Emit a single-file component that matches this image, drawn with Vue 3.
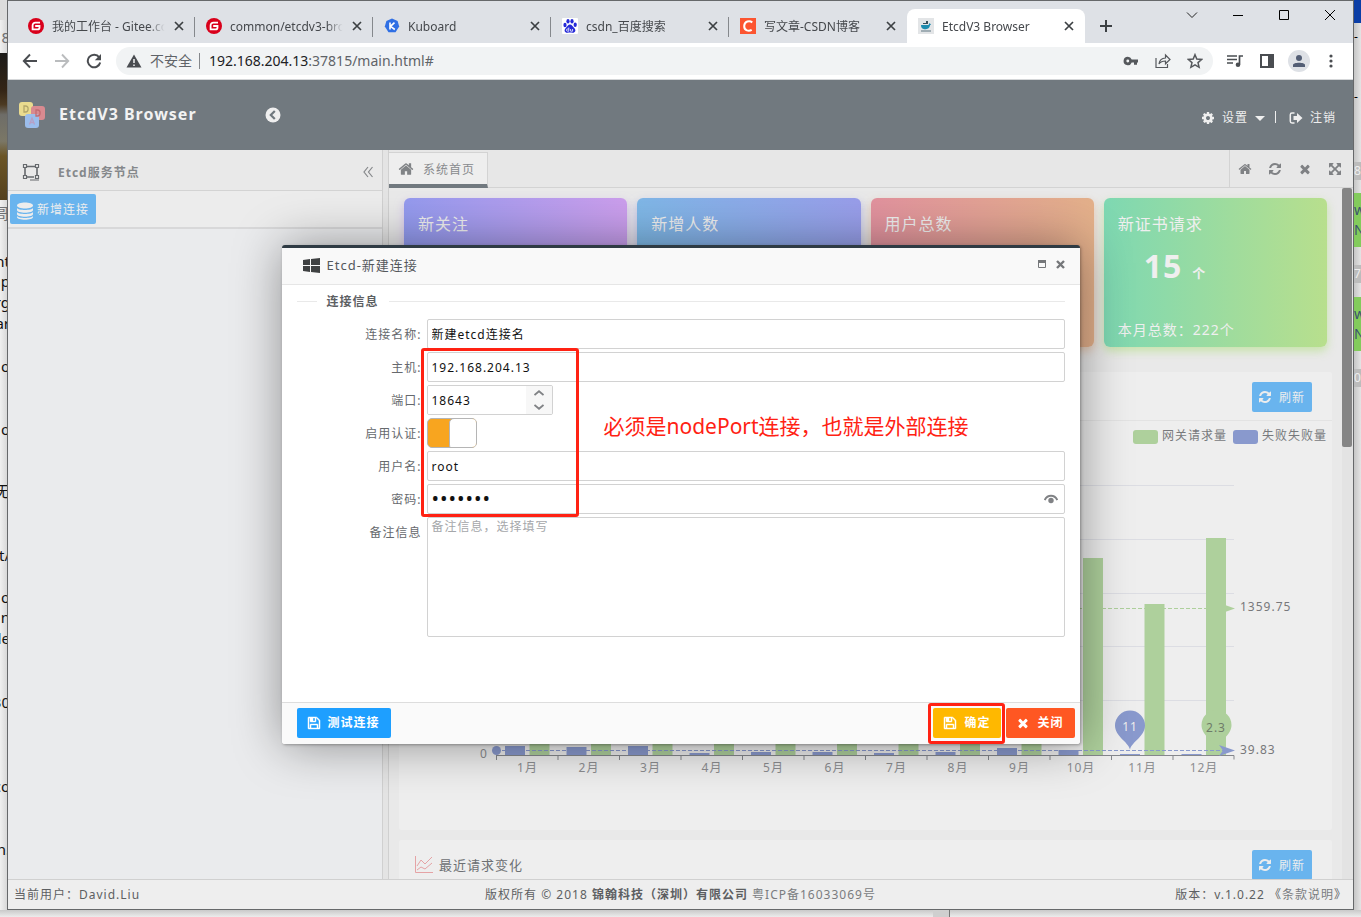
<script setup>
import { ref } from 'vue'

const fa = {
  home: 'M1472 992v480q0 26-19 45t-45 19h-384v-384h-256v384h-384q-26 0-45-19t-19-45v-480q0-1 .5-3t.5-3l575-474 575 474q1 2 1 6zm223-69l-62 74q-8 9-21 11h-3q-13 0-21-7l-692-577-692 577q-12 8-24 7-13-2-21-11l-62-74q-8-10-7-23.5t11-21.5l719-599q32-26 76-26t76 26l244 204v-195q0-14 9-23t23-9h192q14 0 23 9t9 23v408l219 182q10 8 11 21.5t-7 23.5z',
  refresh: 'M1639 1056q0 5-1 7-64 268-268 434.5t-478 166.5q-146 0-282.5-55t-243.5-157l-129 129q-19 19-45 19t-45-19-19-45v-448q0-26 19-45t45-19h448q26 0 45 19t19 45-19 45l-137 137q71 66 161 102t187 36q134 0 250-65t186-179q11-17 53-117 8-23 30-23h192q13 0 22.5 9.5t9.5 22.5zm25-800v448q0 26-19 45t-45 19h-448q-26 0-45-19t-19-45 19-45l138-138q-148-137-349-137-134 0-250 65t-186 179q-11 17-53 117-8 23-30 23h-199q-13 0-22.5-9.5t-9.5-22.5v-7q65-268 270-434.5t480-166.5q146 0 284 55.5t245 156.5l130-129q19-19 45-19t45 19 19 45z',
  times: 'M1490 1322q0 40-28 68l-136 136q-28 28-68 28t-68-28l-294-294-294 294q-28 28-68 28t-68-28l-136-136q-28-28-28-68t28-68l294-294-294-294q-28-28-28-68t28-68l136-136q28-28 68-28t68 28l294 294 294-294q28-28 68-28t68 28l136 136q28 28 28 68t-28 68l-294 294 294 294q28 28 28 68z',
  expand: 'M1411 541l-355 355 355 355 144-144q29-31 70-14 39 17 39 59v448q0 26-19 45t-45 19h-448q-42 0-59-40-17-39 14-69l144-144-355-355-355 355 144 144q31 30 14 69-17 40-59 40h-448q-26 0-45-19t-19-45v-448q0-42 40-59 39-17 69 14l144 144 355-355-355-355-144 144q-19 19-45 19-12 0-24-5-40-17-40-59v-448q0-26 19-45t45-19h448q42 0 59 40 17 39-14 69l-144 144 355 355 355-355-144-144q-31-30-14-69 17-40 59-40h448q26 0 45 19t19 45v448q0 42-39 59-13 5-25 5-26 0-45-19z',
  cog: 'M1152 896q0-106-75-181t-181-75-181 75-75 181 75 181 181 75 181-75 75-181zm512-109v222q0 12-8 23t-20 13l-185 28q-19 54-39 91 35 50 107 138 10 12 10 25t-9 23q-27 37-99 108t-94 71q-12 0-26-9l-138-108q-44 23-91 38-16 136-29 186-7 28-36 28h-222q-14 0-24.5-8.5t-11.5-21.5l-28-184q-49-16-90-37l-141 107q-10 9-25 9-14 0-25-11-126-114-165-168-7-10-7-23 0-12 8-23 15-21 51-66.5t54-70.5q-27-50-41-99l-183-27q-13-2-21-12.5t-8-23.5v-222q0-12 8-23t19-13l186-28q14-46 39-92-40-57-107-138-10-12-10-24 0-10 9-23 26-36 98.5-107.5t94.5-71.5q13 0 26 10l138 107q44-23 91-38 16-136 29-186 7-28 36-28h222q14 0 24.5 8.5t11.5 21.5l28 184q49 16 90 37l142-107q9-9 24-9 13 0 25 10 129 119 165 170 7 8 7 22 0 12-8 23-15 21-51 66.5t-54 70.5q26 50 41 98l183 28q13 2 21 12.5t8 23.5z',
  save: 'M512 1536h768v-384h-768v384zm896 0h128v-896q0-14-10-38.5t-20-34.5l-281-281q-10-10-34-20t-39-10v416q0 40-28 68t-68 28h-576q-40 0-68-28t-28-68v-416h-128v1280h128v-416q0-40 28-68t68-28h832q40 0 68 28t28 68v416zm-384-928v-320q0-13-9.5-22.5t-22.5-9.5h-192q-13 0-22.5 9.5t-9.5 22.5v320q0 13 9.5 22.5t22.5 9.5h192q13 0 22.5-9.5t9.5-22.5zm640 32v928q0 40-28 68t-68 28h-1344q-40 0-68-28t-28-68v-1344q0-40 28-68t68-28h928q40 0 88 20t76 48l280 280q28 28 48 76t20 88z'
}

const tabs = [
  { icon: 'gitee', title: '我的工作台 - Gitee.com' },
  { icon: 'gitee', title: 'common/etcdv3-browser' },
  { icon: 'kuboard', title: 'Kuboard' },
  { icon: 'baidu', title: 'csdn_百度搜索' },
  { icon: 'csdn', title: '写文章-CSDN博客' },
  { icon: 'docker', title: 'EtcdV3 Browser', active: true }
]

const leftLines = [
  { top: 28, text: '8', tone: 'dim' }, { top: 204, text: '哥', tone: 'dim' },
  { top: 252, text: 'nt' }, { top: 272, text: 'mp' }, { top: 293, text: 'rg' }, { top: 314, text: 'ar' },
  { top: 357, text: 'o' }, { top: 420, text: 'o' }, { top: 482, text: '无' }, { top: 546, text: 't/' },
  { top: 588, text: 'o' }, { top: 608, text: 'in' }, { top: 629, text: 'de' }, { top: 693, text: '30' },
  { top: 777, text: 'co' }, { top: 840, text: 'n.' }
]

const cards = [
  { title: '新关注', count: '12', unit: '个', total: '本月总数：180个', tone: 'violet' },
  { title: '新增人数', count: '18', unit: '个', total: '本月总数：246个', tone: 'sky' },
  { title: '用户总数', count: '96', unit: '个', total: '本月总数：960个', tone: 'coral' },
  { title: '新证书请求', count: '15', unit: '个', total: '本月总数：222个', tone: 'mint' }
]

const axisY = 334
const step = 61.5
const months = [
  { ok: 120, fail: 9 }, { ok: 140, fail: 8 }, { ok: 110, fail: 9 }, { ok: 150, fail: 2 },
  { ok: 130, fail: 3 }, { ok: 160, fail: 3 }, { ok: 120, fail: 2 }, { ok: 145, fail: 3 },
  { ok: 170, fail: 7 }, { ok: 197, fail: 5 }, { ok: 151, fail: 1 }, { ok: 217, fail: 1 }
].map((m, i) => ({ ...m, x: 97.5 + i * step, label: `${i + 1}月` }))
const grid = [65, 119, 173, 226, 280]

const form = ref({
  name: '新建etcd连接名', host: '192.168.204.13', port: '18643', auth: true, user: 'root', password: 'etcd123', note: ''
})
const bump = (n) => { form.value.port = String(Number(form.value.port) + n) }
</script>

<template>
  <div class="desktop">
    <div class="behind-left" aria-hidden="true">
      <div class="photo"></div>
      <span v-for="l in leftLines" :key="l.top" class="frag" :class="l.tone" :style="{ top: l.top + 'px' }">{{ l.text }}</span>
    </div>

    <div class="window">
      <header class="tabstrip">
        <div v-for="(t, i) in tabs" :key="i" class="tab" :class="{ active: t.active, last: i === 4 }">
          <svg v-if="t.icon === 'gitee'" class="fav" viewBox="0 0 16 16"><circle cx="8" cy="8" r="8" fill="#d9001b" /><path d="M12 4.6H7.4a2.8 2.8 0 0 0-2.8 2.8v4h4.900a2 2 0 0 0 2-2V8H7.200" fill="none" stroke="#fff" stroke-width="1.800" /></svg>
          <svg v-else-if="t.icon === 'kuboard'" class="fav" viewBox="0 0 16 16"><path d="M8 .6l5.600 2.400 1.600 5.600-3.700 5.700H4.500L.8 8.600 2.400 3z" fill="#2f6fe4" /><path d="M6 4.500v7M10.500 4.700L6.500 8.300l4.300 3.200" fill="none" stroke="#fff" stroke-width="1.600" /></svg>
          <svg v-else-if="t.icon === 'baidu'" class="fav" viewBox="0 0 16 16"><rect width="16" height="16" rx="1" fill="#fff" /><g fill="#2529d8"><ellipse cx="3" cy="7" rx="1.600" ry="2.200" /><ellipse cx="6" cy="3.300" rx="1.600" ry="2.200" /><ellipse cx="10" cy="3.300" rx="1.600" ry="2.200" /><ellipse cx="13.200" cy="6.800" rx="1.600" ry="2.200" /><path d="M8 6.600c2 0 2.600 2 4.200 3.400 2.400 2.200.8 5.200-1.800 4.800-1.600-.3-3.200-.3-4.800 0C3 15.200 1.400 12.200 3.800 10 5.400 8.600 6 6.600 8 6.600z" /></g><path d="M6.800 9.500v3.700H5.600a1 1 0 0 1 0-2.200h1.200M8.600 11v2.200h2V11" fill="none" stroke="#fff" stroke-width=".8" /></svg>
          <svg v-else-if="t.icon === 'csdn'" class="fav" viewBox="0 0 16 16"><rect width="16" height="16" fill="#fc5531" /><path d="M12.300 4.300C9.500 2.400 4.500 3 4.200 8c-.1 4.900 4.700 5.500 7.500 3.800" fill="none" stroke="#fff" stroke-width="2" /></svg>
          <svg v-else class="fav" viewBox="0 0 16 16"><rect width="16" height="16" fill="#e3e5e7" /><path d="M3 7h7.500l1-2 1.500 1.500-1 .7C11.500 10.500 9 11.300 6.500 11.200 4 11 3 9.500 3 7z" fill="#1d8caf" /><path d="M5 5h3V3h2v3H5z" fill="#39505c" /><path d="M3 13h10" stroke="#8a9aa3" stroke-width="1.500" /></svg>
          <span class="tab-title">{{ t.title }}</span>
          <button class="tab-close" aria-label="关闭标签页"><svg width="10" height="10" viewBox="0 0 10 10"><path d="M1 1l8 8M9 1L1 9" stroke="#3c4043" stroke-width="1.700" /></svg></button>
        </div>
        <button class="new-tab" aria-label="新标签页"><svg width="12" height="12" viewBox="0 0 12 12"><path d="M6 0v12M0 6h12" stroke="#3c4043" stroke-width="2" /></svg></button>
        <div class="win-ctl">
          <button aria-label="搜索标签页"><svg width="12" height="12" viewBox="0 0 12 12"><path d="M1 3.500l5 5 5-5" fill="none" stroke="#222" /></svg></button>
          <button aria-label="最小化"><svg width="12" height="12" viewBox="0 0 12 12"><path d="M1 6.500h10" stroke="#000" /></svg></button>
          <button aria-label="最大化"><svg width="12" height="12" viewBox="0 0 12 12"><path d="M1.500 1.500h9v9h-9z" fill="none" stroke="#000" /></svg></button>
          <button aria-label="关闭"><svg width="12" height="12" viewBox="0 0 12 12"><path d="M1 1l10 10M11 1L1 11" stroke="#000" /></svg></button>
        </div>
      </header>

      <div class="toolbar">
        <button aria-label="后退"><svg width="16" height="16" viewBox="0 0 16 16"><path d="M15 8H2M8 1.500L1.800 8 8 14.500" fill="none" stroke="#4a4d51" stroke-width="1.900" /></svg></button>
        <button aria-label="前进"><svg width="16" height="16" viewBox="0 0 16 16"><path d="M1 8h13M8 1.500L14.200 8 8 14.500" fill="none" stroke="#babcbe" stroke-width="1.900" /></svg></button>
        <button aria-label="刷新"><svg width="16" height="16" viewBox="0 0 16 16"><path d="M13.200 4.300A6.300 6.300 0 1 0 14.200 9.500" fill="none" stroke="#4a4d51" stroke-width="2" /><path d="M15 1v6.200H8.800z" fill="#4a4d51" /></svg></button>
        <div class="omnibox">
          <svg width="16" height="14" viewBox="0 0 16 14"><path d="M8 .5L15.500 13.500H.5z" fill="#4a4d51" /><path d="M8 5v4M8 10.500v1.600" stroke="#fff" stroke-width="1.400" /></svg>
          <span class="insecure">不安全</span>
          <i class="omni-sep"></i>
          <span class="url"><b>192.168.204.13</b>:37815/main.html#</span>
          <div class="omni-icons">
            <svg width="16" height="16" viewBox="0 0 16 16"><path fill-rule="evenodd" d="M4.800 3.800a4.200 4.200 0 0 1 3.900 2.700H15v3h-1v2.200h-3V9.500H8.700A4.200 4.200 0 1 1 4.800 3.800zm0 2.800a1.400 1.400 0 1 0 0 2.900 1.400 1.400 0 0 0 0-2.900z" fill="#55585c" /></svg>
            <svg width="16" height="16" viewBox="0 0 16 16"><path d="M1 5v9.500h11.500V11M4 11c.5-4 3-5.800 6.500-6V2l4.500 4.500-4.500 4.300V8C7.500 8 5.500 8.800 4 11z" fill="none" stroke="#55585c" stroke-width="1.200" /></svg>
            <svg width="16" height="16" viewBox="0 0 16 16"><path d="M8 1.700l1.800 4.400 4.800.4L11 9.600l1.100 4.700L8 11.800l-4.100 2.500L5 9.600 1.400 6.500l4.800-.4z" fill="none" stroke="#55585c" stroke-width="1.500" /></svg>
          </div>
        </div>
        <div class="tools">
          <svg width="16" height="16" viewBox="0 0 16 16"><path d="M0 3h10M0 6.500h10M0 10h6M12.500 11.500V3H16" fill="none" stroke="#4a4d51" stroke-width="1.700" /><circle cx="11" cy="11.700" r="2.300" fill="#4a4d51" /></svg>
          <svg width="16" height="16" viewBox="0 0 16 16"><path d="M1 1h14v14H1z M3 3v10h6V3z" fill-rule="evenodd" fill="#4a4d51" /></svg>
          <span class="avatar"><svg width="14" height="14" viewBox="0 0 14 14"><circle cx="7" cy="4" r="3" fill="#535e75" /><path d="M1 13v-2c0-3 12-3 12 0v2z" fill="#535e75" /></svg></span>
          <svg width="16" height="16" viewBox="0 0 16 16"><g fill="#4a4d51"><circle cx="8" cy="3" r="1.600" /><circle cx="8" cy="8" r="1.600" /><circle cx="8" cy="13" r="1.600" /></g></svg>
        </div>
      </div>

      <div class="app">
        <header class="app-head">
          <svg class="logo" width="28" height="28" viewBox="0 0 28 28"><rect x="1" y="1" width="14" height="14" rx="3" fill="#eadb8f" /><rect x="13" y="5" width="14" height="14" rx="3" fill="#d98a90" /><rect x="7" y="13" width="14" height="14" rx="3" fill="#9bbdec" /><path d="M6 5v6h1.500c3.500 0 3.500-6 0-6z" fill="none" stroke="#b3a76b" stroke-width="1.300" /><path d="M18 9v6h1.500c3.500 0 3.500-6 0-6z" fill="none" stroke="#c26b72" stroke-width="1.300" /><path d="M11.500 23.500l2.500-6.500 2.500 6.500M12.500 21.500h3" fill="none" stroke="#b79fc4" stroke-width="1.300" /></svg>
          <h1>EtcdV3 Browser</h1>
          <button class="fold" aria-label="收起菜单"><svg width="16" height="16" viewBox="0 0 16 16"><circle cx="8" cy="8" r="7.500" fill="#efefef" /><path d="M9.800 4L5.800 8l4 4" fill="none" stroke="#71797f" stroke-width="2.200" /></svg></button>
          <nav>
            <a href="#"><svg width="14" height="14" viewBox="0 0 1792 1792"><path :d="fa.cog" fill="#efefef" /></svg>设置<i class="caret"></i></a>
            <i class="bar"></i>
            <a href="#"><svg width="14" height="14" viewBox="0 0 14 14"><path d="M5.500 2H3a1.700 1.700 0 0 0-1.700 1.700v6.600A1.700 1.700 0 0 0 3 12h2.500" fill="none" stroke="#efefef" stroke-width="1.500" /><path d="M4.500 5H8V2l5.500 5L8 12V9H4.500z" fill="#efefef" /></svg>注销</a>
          </nav>
        </header>

        <main>
          <aside>
            <div class="side-head">
              <svg width="18" height="18" viewBox="0 0 18 18"><path d="M3 3.500h12M3 14h9M3 3.500V14M15 3.500V14" fill="none" stroke="#66696d" stroke-width="1.600" /><g fill="#ececec" stroke="#66696d" stroke-width="1.200"><path d="M1.500 1.500h3v3h-3zM13.500 1.500h3v3h-3zM1.500 12.500h3v3h-3zM13.500 12.500h3v3h-3z" /></g><path d="M8 17h9" stroke="#66696d" /></svg>
              <strong>Etcd服务节点</strong>
              <button aria-label="收起"><svg width="10" height="12" viewBox="0 0 10 12"><path d="M5 1L1 6l4 5M9.500 1l-4 5 4 5" fill="none" stroke="#85878a" stroke-width="1.200" /></svg></button>
            </div>
            <div class="side-tools">
              <button class="btn soft add"><svg width="16" height="18" viewBox="0 0 16 18"><g fill="#ededed"><path d="M0 3.500C0-.5 16-.5 16 3.500S0 7.500 0 3.500z" /><path d="M0 6c1 2.600 15 2.600 16 0v2c0 3.600-16 3.600-16 0z" /><path d="M0 10c1 2.600 15 2.600 16 0v2c0 3.600-16 3.600-16 0z" /><path d="M0 14c1 2.600 15 2.600 16 0v1c0 3.600-16 3.600-16 0z" /></g></svg><span>新增连接</span></button>
            </div>
          </aside>

          <section class="content">
            <div class="page-tabs">
              <a href="#" class="page-tab"><svg width="16" height="16" viewBox="0 0 1792 1792"><path :d="fa.home" fill="#808386" /></svg><span>系统首页</span></a>
              <div class="page-tools">
                <button v-for="k in ['home', 'refresh', 'times', 'expand']" :key="k" :aria-label="k"><svg width="14" height="14" viewBox="0 0 1792 1792"><path :d="fa[k]" fill="#7f8184" /></svg></button>
              </div>
            </div>
            <div class="scroll">
              <div class="scroll-body">
                <div class="cards">
                  <article v-for="c in cards" :key="c.title" class="card" :class="c.tone">
                    <h2>{{ c.title }}</h2>
                    <p class="count"><b>{{ c.count }}</b><span>{{ c.unit }}</span></p>
                    <p class="total">{{ c.total }}</p>
                  </article>
                </div>

                <section class="panel">
                  <div class="panel-head">
                    <button class="btn soft"><svg width="14" height="14" viewBox="0 0 1792 1792"><path :d="fa.refresh" fill="#ededed" /></svg><span>刷新</span></button>
                  </div>
                  <div class="legend"><i class="ok"></i>网关请求量<i class="fail"></i>失败失败量</div>
                  <svg class="chart" viewBox="0 0 933 384">
                    <path v-for="y in grid" :key="y" :d="`M97 ${y - 0.5}h738`" stroke="#dcdde3" />
                    <g v-for="m in months" :key="m.label">
                      <rect :x="m.x + 8.500" :y="axisY - m.fail" width="20" :height="m.fail" fill="#8999cd" />
                      <rect :x="m.x + 33" :y="axisY - m.ok" width="20" :height="m.ok" fill="#aed09c" />
                      <path :d="`M${m.x} ${axisY}v5`" stroke="#85878c" />
                      <text :x="m.x + 31" y="351" text-anchor="middle" fill="#8c8d90">{{ m.label }}</text>
                    </g>
                    <path d="M97 334.500h738v4" fill="none" stroke="#85878c" />
                    <text x="81" y="337" fill="#8c8d90">0</text>
                    <path d="M97 187.500h730" stroke="#aed09c" stroke-dasharray="4 2" />
                    <path d="M826 184l10 3.500-10 3.500z" fill="#aed09c" />
                    <path d="M97 329.500h730" stroke="#8999cd" stroke-dasharray="4 2" />
                    <circle cx="97.500" cy="329.500" r="4.500" fill="#8999cd" />
                    <path d="M820 324l16 5.500-16 5.500 4-5.500z" fill="#8999cd" />
                    <path d="M731 328.500c-2-8-15-13-15-24a15 15 0 0 1 30 0c0 11-13 16-15 24z" fill="#8999cd" />
                    <path d="M817.500 328c-2-8-15-13-15-24a15 15 0 0 1 30 0c0 11-13 16-15 24z" fill="#aed09c" />
                    <text x="731" y="310" text-anchor="middle" fill="#eee">11</text>
                    <text x="817" y="311" text-anchor="middle" fill="#6e7b69">2.3</text>
                    <text x="841" y="190" fill="#77787b">1359.75</text>
                    <text x="841" y="333" fill="#77787b">39.83</text>
                  </svg>
                </section>

                <section class="panel">
                  <div class="panel-head">
                    <h3><svg width="18" height="18" viewBox="0 0 18 18"><path d="M.5 0v16.500H18M2 10l4-6 4 4 7-7M2 14l4-3 4 2 7-6" fill="none" stroke="#e5a3a5" /></svg>最近请求变化</h3>
                    <button class="btn soft"><svg width="14" height="14" viewBox="0 0 1792 1792"><path :d="fa.refresh" fill="#ededed" /></svg><span>刷新</span></button>
                  </div>
                </section>
              </div>
              <div class="track"><div class="thumb"></div></div>
            </div>
          </section>
        </main>

        <footer class="app-foot">
          <span>当前用户：David.Liu</span>
          <span>版权所有 © 2018 <b>锦翰科技（深圳）有限公司</b> <em>粤ICP备16033069号</em></span>
          <span class="version">版本：v.1.0.22 《<a href="#">条款说明</a>》</span>
        </footer>

        <div class="overlay">
          <div class="dialog" role="dialog" aria-labelledby="dlg-title">
            <div class="dlg-head">
              <svg width="17" height="15" viewBox="0 0 17 15"><path d="M0 2l7-1v6H0zM8 .9L17 0v7H8zM0 8h7v6l-7-1zM8 8h9v7l-9-1z" fill="#3f4142" /></svg>
              <span id="dlg-title">Etcd-新建连接</span>
              <button aria-label="最大化"><svg width="8" height="8" viewBox="0 0 8 8"><path d="M.5.5h7v7h-7z" fill="none" stroke="#75777a" /><path d="M0 0h8v3H0z" fill="#75777a" /></svg></button>
              <button aria-label="关闭"><svg width="9" height="9" viewBox="0 0 9 9"><path d="M1 1l7 7M8 1L1 8" stroke="#75777a" stroke-width="2.400" /></svg></button>
            </div>
            <form class="dlg-body" @submit.prevent>
              <fieldset>
                <legend>连接信息</legend>
                <div class="row"><label for="f-name">连接名称:</label><input id="f-name" v-model="form.name" class="box" type="text" /></div>
                <div class="row"><label for="f-host">主机:</label><input id="f-host" v-model="form.host" class="box" type="text" /></div>
                <div class="row">
                  <label for="f-port">端口:</label>
                  <div class="spinner">
                    <input id="f-port" v-model="form.port" type="text" inputmode="numeric" />
                    <div class="spin-btns">
                      <button type="button" aria-label="增加" @click="bump(1)"><svg width="10" height="6" viewBox="0 0 10 6"><path d="M.5 5L5 1.200 9.500 5" fill="none" stroke="#808285" stroke-width="1.800" /></svg></button>
                      <button type="button" aria-label="减少" @click="bump(-1)"><svg width="10" height="6" viewBox="0 0 10 6"><path d="M.5 1L5 4.800 9.500 1" fill="none" stroke="#808285" stroke-width="1.800" /></svg></button>
                    </div>
                  </div>
                </div>
                <div class="row"><label for="f-auth">启用认证:</label><input id="f-auth" v-model="form.auth" class="switch" type="checkbox" /></div>
                <div class="row"><label for="f-user">用户名:</label><input id="f-user" v-model="form.user" class="box" type="text" /></div>
                <div class="row">
                  <label for="f-pass">密码:</label>
                  <div class="box pass">
                    <input id="f-pass" v-model="form.password" type="password" />
                    <button type="button" aria-label="显示密码"><svg width="14" height="10" viewBox="0 0 14 10"><path d="M.7 6C3.500.300 10.500.300 13.300 6" fill="none" stroke="#808285" stroke-width="2" /><circle cx="7" cy="6.500" r="2.700" fill="#808285" /></svg></button>
                  </div>
                </div>
                <div class="row"><label for="f-note">备注信息</label><textarea id="f-note" v-model="form.note" class="box" placeholder="备注信息，选择填写"></textarea></div>
              </fieldset>
              <div class="mark-fields"></div>
              <p class="note">必须是nodePort连接，也就是外部连接</p>
            </form>
            <div class="dlg-foot">
              <button class="btn test"><svg width="14" height="14" viewBox="0 0 1792 1792"><path :d="fa.save" fill="#fff" stroke="#fff" stroke-width="60" /></svg>测试连接</button>
              <span class="marked"><button class="btn confirm"><svg width="14" height="14" viewBox="0 0 1792 1792"><path :d="fa.save" fill="#fff" stroke="#fff" stroke-width="60" /></svg>确定</button></span>
              <button class="btn close"><svg width="14" height="14" viewBox="0 0 1792 1792"><path :d="fa.times" fill="#fff" /></svg>关闭</button>
            </div>
          </div>
        </div>
      </div>
    </div>

    <div class="behind-right" aria-hidden="true">
      <div class="blue"></div><span class="dash d1">-</span><span class="dash d2">-</span>
      <div class="chip c1">8:</div><div class="bubble b1">w<br />No</div>
      <div class="chip c2">7:</div><div class="bubble b2">w<br />No</div><div class="chip c3">0:</div>
    </div>
    <div class="behind-bottom" aria-hidden="true"><i></i></div>
  </div>
</template>

<style>
body { margin: 0; overflow: hidden; }
</style>

<style scoped>
.desktop { display: grid; grid-template-columns: 7px 1fr 7px; grid-template-rows: 1fr 7px; height: 100vh; font-family: "Noto Sans", "Noto Sans CJK SC", sans-serif; font-size: 12px; overflow: hidden; }
* { box-sizing: border-box; }
button { font: inherit; letter-spacing: inherit; border: 0; padding: 0; background: none; display: flex; align-items: center; justify-content: center; cursor: pointer; }
svg { flex: none; display: block; }
a { color: inherit; text-decoration: none; }
h1, h2, h3, p { margin: 0; font-weight: 400; }

.behind-left { position: relative; overflow: hidden; background: linear-gradient(90deg, #f0f0f0, #d8d8d8); border-top: 20px solid #dcdcdc; }
.frag { position: absolute; right: -3px; margin-top: -21px; font-size: 15px; line-height: 20px; color: #111; white-space: nowrap; }
.frag.dim { color: #6d6f72; }
.photo { position: absolute; top: 33px; width: 7px; height: 147px; background: linear-gradient(#1b1a18, #332415 25%, #4c3a22 35%, #6e6d68 42%, #7b7766 60%, #6b5526 70%, #54401d); }
.behind-right { position: relative; overflow: hidden; background: linear-gradient(90deg, #c6c6c6, #e4e4e4); }
.behind-right > * { position: absolute; left: 0; width: 7px; overflow: hidden; white-space: nowrap; }
.blue { top: 0; height: 23px; background: #0b3ea6; }
.d1 { top: 28px; } .d2 { top: 88px; }
.chip { height: 18px; line-height: 18px; background: #bcbcbc; color: #eee; }
.c1 { top: 162px; } .c2 { top: 265px; } .c3 { top: 369px; }
.bubble { height: 54px; padding-top: 7px; background: #83cb5c; color: #3c5470; font-size: 14px; line-height: 20px; }
.b1 { top: 193px; } .b2 { top: 297px; }
.behind-bottom { grid-column: 1 / -1; background: linear-gradient(#c9c9c9, #ececec); }
.behind-bottom i { display: block; width: 17px; height: 7px; margin-left: 933px; background: #cfcfcf; border-right: 1px solid #777; }

.window { display: flex; flex-direction: column; min-width: 0; min-height: 0; border: 1px solid #66686a; background: #fff; box-shadow: 0 0 8px rgba(0, 0, 0, .3); }
.tabstrip { display: flex; height: 42px; padding: 8px 0 0 9px; background: #dee1e6; color: #45484c; }
.tab { position: relative; display: flex; align-items: center; flex: 0 1 178px; min-width: 0; height: 34px; padding: 0 11px; }
.tab::after { content: ""; position: absolute; right: 0; top: 8px; height: 20px; border-right: 1px solid #85888c; }
.tab.active::after, .tab.last::after { display: none; }
.tab.active { background: #fff; border-radius: 8px 8px 0 0; }
.fav { width: 16px; height: 16px; margin-right: 8px; }
.tab-title { flex: 1; min-width: 0; padding-top: 2px; overflow: hidden; white-space: nowrap; line-height: 18px; mask-image: linear-gradient(90deg, #000 84%, transparent 98%); }
.tab-close { margin-left: 7px; }
.new-tab { width: 42px; height: 34px; }
.win-ctl { display: flex; margin-left: auto; align-self: flex-start; margin-top: -8px; }
.win-ctl button { width: 46px; height: 28px; }
.toolbar { display: flex; align-items: center; height: 37px; padding-left: 6px; border-bottom: 1px solid #d5d7d9; }
.toolbar > button { width: 32px; height: 32px; }
.omnibox { display: flex; align-items: center; flex: 1; min-width: 0; height: 28px; margin-left: 6px; padding: 0 10px; border-radius: 14px; background: #f1f3f4; font-size: 14px; color: #5f6368; line-height: 20px; }
.insecure { margin-left: 8px; }
.omni-sep { width: 1px; height: 16px; margin: 0 9px 0 7px; background: #85888c; }
.url b { font-weight: 400; color: #202124; }
.omni-icons { display: flex; gap: 16px; margin-left: auto; }
.tools { display: flex; align-items: center; gap: 16px; padding: 0 14px 0 14px; }
.avatar { display: flex; align-items: center; justify-content: center; width: 22px; height: 22px; margin: 0 -3px; border-radius: 50%; background: #dee1e6; }

.app { position: relative; display: flex; flex-direction: column; flex: 1; min-height: 0; letter-spacing: 1px; color: #66696d; background: #e9e9e9; }
.app-head { display: flex; align-items: center; height: 70px; flex: none; padding: 0 17px 0 10px; background: #71797f; color: #efefef; }
.app-head h1 { margin: 0 0 3px 13px; font-size: 16px; font-weight: 700; line-height: 24px; color: #f2f2f2; }
.fold { margin-left: 68px; }
.app-head nav { display: flex; align-items: center; margin: 6px 0 0 auto; line-height: 20px; }
.app-head nav a { display: flex; align-items: center; gap: 7px; }
.caret { border: 5px solid transparent; border-top-color: #efefef; border-bottom: 0; }
.bar { width: 1px; height: 12px; margin: 0 13px 2px 10px; background: #efefef; }
main { display: flex; flex: 1; min-height: 0; }
aside { display: flex; flex-direction: column; flex: 0 0 375px; border-right: 1px solid #d0d0d0; background: #eaebed; }
.side-head { display: flex; align-items: center; height: 41px; padding: 4px 9px 0 14px; border-bottom: 1px solid #d3d3d3; background: #e9e9e9; color: #85888b; }
.side-head strong { flex: 1; margin-left: 18px; padding-top: 2px; line-height: 20px; }
.side-tools { height: 38px; padding: 3px 2px; border-bottom: 2px solid #d8d8d9; background: #ececec; }
.btn { height: 30px; padding: 0 7px 0 6px; gap: 7px; border-radius: 2px; color: #fff; line-height: 20px; white-space: nowrap; }
.btn.soft { background: #69b4ee; color: #ededed; }
.btn span { padding-top: 2px; }
.btn.add { gap: 4px; padding: 0 7px; }
.btn.add svg { margin-top: 4px; }
.content { display: flex; flex-direction: column; flex: 1; min-width: 0; margin-left: 5px; border-left: 1px solid #d0d0d0; box-shadow: -5px 0 0 #e4e4e4; }
.page-tabs { display: flex; height: 38px; flex: none; background: #e7e7e7; border-bottom: 1px solid #d3d3d3; }
.page-tab { display: flex; align-items: center; gap: 9px; height: 36px; margin-top: 2px; padding: 0 12px 0 9px; border: 1px solid #d3d3d3; border-left: 0; border-bottom: 4px solid #71797f; background: #eeeeee; line-height: 20px; color: #888a8d; }
.page-tab span { padding-top: 2px; }
.page-tools { display: flex; margin-left: auto; border-left: 1px solid #d3d3d3; padding-right: 3px; }
.page-tools button { width: 30px; }
.scroll { display: flex; flex: 1; min-height: 0; }
.scroll-body { flex: 1; min-width: 0; overflow: hidden; padding: 10px; }
.track { width: 11px; background: #e3e3e3; }
.thumb { width: 10px; height: 259px; border-radius: 2px; background: #858585; }
.cards { display: grid; grid-template-columns: repeat(4, 1fr); gap: 10px; margin: 0 5px 25px; }
.card { height: 149px; padding: 13px 14px; border-radius: 6px; color: #efefef; }
.card h2 { font-size: 16px; line-height: 26px; }
.count { display: flex; align-items: baseline; gap: 10px; margin: 5px 0 0 26px; line-height: 48px; }
.count b { font-size: 32px; }
.count span { font-size: 13px; font-weight: 700; }
.total { margin-top: 22px; font-size: 14px; line-height: 22px; }
.violet { background: linear-gradient(70deg, #8799ee, #cc9eec); box-shadow: 0 4px 10px rgba(190, 158, 236, .6); }
.sky { background: linear-gradient(70deg, #79bde6, #999dea); box-shadow: 0 4px 10px rgba(153, 157, 234, .6); }
.coral { background: linear-gradient(90deg, #e1929e, #e3b08a); box-shadow: 0 4px 10px rgba(227, 176, 138, .6); }
.mint { background: linear-gradient(90deg, #7ed8b2, #b8df8d); box-shadow: 0 4px 10px rgba(184, 223, 141, .7); }
.panel { margin-bottom: 10px; border-radius: 2px; background: #eeeeee; height: 458px; }
.panel-head { display: flex; align-items: center; height: 49px; padding: 2px 20px 0 16px; border-bottom: 1px solid #e3e3e3; }
.panel-head .btn { margin-left: auto; }
.panel-head h3 { display: flex; align-items: center; gap: 6px; font-size: 13px; line-height: 20px; color: #6d7073; }
.legend { display: flex; align-items: center; justify-content: flex-end; height: 30px; padding-right: 5px; line-height: 20px; color: #77797c; }
.legend i { width: 25px; height: 14px; margin: 2px 4px 0 6px; border-radius: 3px; }
.ok { background: #aed09c; }
.fail { background: #8999cd; }
.chart { width: 100%; margin-top: -30px; font-size: 12px; }
.app-foot { display: grid; grid-template-columns: 1fr auto 1fr; align-items: center; height: 30px; flex: none; padding: 2px 6px; border-top: 1px solid #d0d0d0; background: #eeeeee; line-height: 20px; color: #5d5f62; }
.app-foot em { font-style: normal; color: #7a7c7f; }
.version { text-align: right; }
.version a { color: #7a7c7f; }

.overlay { position: absolute; inset: 0; display: flex; align-items: center; justify-content: center; overflow: hidden; }
.dialog { width: 798px; max-width: 100%; border-top: 3px solid #2f3b44; border-radius: 3px; background: #fff; box-shadow: 1px 1px 3px rgba(0, 0, 0, .3), 1px 1px 50px rgba(0, 0, 0, .4); color: #66696d; }
.dlg-head { display: flex; align-items: center; height: 37px; padding: 0 15px 2px 21px; border-bottom: 1px solid #e6e6e6; background: #f9f9f9; font-size: 13px; line-height: 20px; color: #54585c; }
.dlg-head span { flex: 1; margin-left: 7px; }
.dlg-head button { margin-bottom: 2px; }
.dlg-head button + button { margin-left: 10px; }
.dlg-body { position: relative; padding: 6px 15px 65px; }
fieldset { margin: 0; padding: 7px 0 0; border: 0; border-top: 1px solid #e9e9e9; min-width: 0; }
legend { margin-left: 20px; padding: 1px 10px 0; font-weight: 700; line-height: 20px; color: #5d6063; }
.row { display: flex; margin-bottom: 3px; }
.row:last-child { margin-bottom: 0; }
label { flex: 0 0 130px; height: 30px; padding-right: 5px; text-align: right; line-height: 32px; }
input, textarea { font: inherit; letter-spacing: inherit; color: #111; outline: 0; }
.box { flex: 1; min-width: 0; height: 30px; padding: 0 4px; border: 1px solid #d2d2d2; border-radius: 2px; background: #fff; }
textarea.box { height: 120px; padding: 0 4px; line-height: 18px; resize: none; display: block; }
textarea::placeholder { color: #a5a7aa; }
.spinner { display: flex; width: 126px; height: 30px; border: 1px solid #d2d2d2; border-radius: 2px; overflow: hidden; }
.spinner input { flex: 1; min-width: 0; padding: 0 4px; border: 0; }
.spin-btns { width: 26px; background: #f7f7f7; }
.spin-btns button { width: 26px; height: 14px; }
.switch { appearance: none; width: 50px; height: 30px; margin: 0; border: 1px solid #b5b5b5; border-radius: 5px; background: #fff; overflow: hidden; }
.switch:checked { background: #f8a51f; }
.switch::before { content: ""; display: block; width: 28px; height: 30px; margin: -1px 0 0; border: 1px solid #b5b5b5; border-radius: 5px; background: #fff; }
.switch:checked::before { margin-left: 21px; }
.pass { display: flex; align-items: center; padding-right: 6px; }
.pass input { flex: 1; min-width: 0; height: 28px; padding: 0; border: 0; font-size: 20px; line-height: 28px; }
.mark-fields { position: absolute; left: 139px; top: 63px; width: 158px; height: 169px; border: 3px solid #ff2213; border-radius: 3px; pointer-events: none; }
.note { position: absolute; left: 322px; top: 126px; font-size: 21px; line-height: 30px; letter-spacing: 0; color: #ff2213; white-space: nowrap; }
.dlg-foot { display: flex; align-items: center; gap: 5px; height: 42px; padding: 0 5px 2px 15px; border-top: 1px solid #dddddd; border-radius: 0 0 3px 3px; background: #fafafa; }
.dlg-foot .btn { padding: 0 11px 0 10px; font-weight: 700; }
.test { background: #1e9fff; margin-right: auto; }
.confirm { background: #ffb800; }
.close { background: #ff5722; }
.marked { position: relative; }
.marked::after { content: ""; position: absolute; inset: -5px -4px -6px -5px; border: 3px solid #ff2213; border-radius: 3px; pointer-events: none; }
</style>
